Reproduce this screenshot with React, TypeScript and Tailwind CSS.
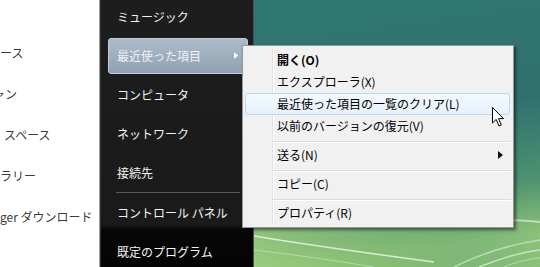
import React from 'react';

const leftItems = [
  { text: 'ース', cls: 'ml-0' },
  { text: 'ャン', cls: 'ml-[-7px]' },
  { text: 'スペース', cls: 'ml-[4px]' },
  { text: 'ラリー', cls: 'ml-0' },
  { text: 'ger ダウンロード', cls: 'ml-0' },
];

const darkItems = ['ミュージック', '最近使った項目', 'コンピュータ', 'ネットワーク', '接続先'];
const darkItems2 = ['コントロール パネル', '既定のプログラム'];

function MenuSep() {
  return (
    <div className="h-[7px] pt-[4px] pl-[27px]">
      <div className="h-px bg-[#dcdcdc]" />
      <div className="h-px bg-white" />
    </div>
  );
}

function MenuRow({ children, bold, active, arrow }: { children: React.ReactNode; bold?: boolean; active?: boolean; arrow?: boolean }) {
  return (
    <div
      className={
        active
          ? 'mr-[1px] flex h-[22px] items-center rounded-[3px] border border-[#b8d9f0] bg-[linear-gradient(#f4f9fe,#e6f1fb)] pl-[31px] text-[12px] text-black'
          : 'flex h-[22px] items-center pl-[32px] text-[12px] text-black'
      }
    >
      <span className={bold ? 'font-bold' : ''}>{children}</span>
      {arrow && (
        <svg className="ml-auto mr-[8px]" width="5" height="8" viewBox="0 0 5 8">
          <path d="M0 0 L5 4 L0 8 Z" fill="#111" />
        </svg>
      )}
    </div>
  );
}

export default function App() {
  return (
    <div className="relative flex h-[267px] w-[540px] overflow-hidden font-['Noto_Sans_CJK_JP','Noto_Sans',sans-serif]">
      {/* left program list */}
      <div className="w-[100px] shrink-0 overflow-hidden border-r border-[#9c9c9c] bg-white pt-[32px]">
        {leftItems.map((it) => (
          <div key={it.text} className="flex h-[41px] items-center whitespace-nowrap text-[12px] text-[#3a3a3a]">
            <span className={it.cls}>{it.text}</span>
          </div>
        ))}
      </div>

      {/* dark right column */}
      <div className="w-[154px] shrink-0 border-l border-[#303030] border-r border-r-[#505050] bg-[linear-gradient(#1d1d1d_0%,#1a1a1a_84%,#070707_86%,#040404_100%)] mt-0">
        <div className="mt-[-3px]">
          {darkItems.map((t) =>
            t === '最近使った項目' ? (
              <div key={t} className="flex h-[39px] items-center">
                <div className="ml-[7px] flex h-[36px] w-[140px] items-center rounded-[3px] border border-[#c3ced8] bg-[linear-gradient(#aebcc9,#8fa1b2)] pl-[8px] text-[12px] text-[#eef2f5]">
                  <span>{t}</span>
                  <svg className="ml-auto mr-[9px]" width="4" height="7" viewBox="0 0 4 7">
                    <path d="M0 0 L4 3.5 L0 7 Z" fill="#ffffff" />
                  </svg>
                </div>
              </div>
            ) : (
              <div key={t} className="flex h-[39px] items-center pl-[16px] text-[12px] text-[#f2f2f2]">
                {t}
              </div>
            )
          )}
          <div className="ml-[15px] mr-[13px] h-px bg-[#5a5a5a]" />
          {darkItems2.map((t) => (
            <div key={t} className="flex h-[39px] items-center pl-[16px] text-[12px] text-[#f2f2f2]">
              {t}
            </div>
          ))}
        </div>
      </div>

      {/* desktop */}
      <div className="relative flex-1">
        <svg className="absolute inset-0" width="286" height="267" viewBox="0 0 286 267">
          <defs>
            <linearGradient id="bg" x1="0" y1="0" x2="0.15" y2="1">
              <stop offset="0" stopColor="#2f7773" />
              <stop offset="0.5" stopColor="#30706f" />
              <stop offset="0.8" stopColor="#4e9271" />
              <stop offset="1" stopColor="#8cc277" />
            </linearGradient>
            <linearGradient id="bl" x1="0" y1="0" x2="1" y2="0">
              <stop offset="0" stopColor="#a6d27e" />
              <stop offset="0.6" stopColor="#72b070" stopOpacity="0.6" />
              <stop offset="1" stopColor="#3c8080" stopOpacity="0" />
            </linearGradient>
          </defs>
          <rect width="286" height="267" fill="url(#bg)" />
          <path d="M0 228 L286 228 L286 267 L0 267 Z" fill="url(#bl)" opacity="0.7" />
          <path d="M0 236 C60 246 120 254 180 262" stroke="#ffffff" strokeOpacity="0.7" strokeWidth="1.5" fill="none" />
          <path d="M0 250 C50 256 90 262 120 267" stroke="#ffffff" strokeOpacity="0.35" strokeWidth="1" fill="none" />
          <path d="M255 220 C265 220 275 221 286 222" stroke="#ffffff" strokeOpacity="0.5" strokeWidth="2" fill="none" />
          <path d="M200 267 C230 252 260 244 286 240" stroke="#ffffff" strokeOpacity="0.45" strokeWidth="1.5" fill="none" />
          <path d="M225 267 C250 257 268 252 286 250" stroke="#ffffff" strokeOpacity="0.55" strokeWidth="1.5" fill="none" />
          <path d="M250 267 C262 262 274 259 286 258" stroke="#ffffff" strokeOpacity="0.4" strokeWidth="1" fill="none" />
        </svg>
      </div>

      {/* context menu */}
      <div className="absolute left-[242px] top-[45px] w-[272px] border border-[#979797] bg-[#f1f1f2] px-[2px] pt-[3px] pb-[3px] shadow-[2px_2px_3px_rgba(0,0,0,0.5)]">
        <div className="absolute bottom-[2px] left-[29px] top-[2px] w-px bg-[#e2e2e2]" />
        <div className="absolute bottom-[2px] left-[30px] top-[2px] w-px bg-white" />
        <div className="relative">
          <MenuRow bold>開く(O)</MenuRow>
          <MenuRow>エクスプローラ(X)</MenuRow>
          <MenuRow active>最近使った項目の一覧のクリア(L)</MenuRow>
          <MenuRow>以前のバージョンの復元(V)</MenuRow>
          <MenuSep />
          <MenuRow arrow>送る(N)</MenuRow>
          <MenuSep />
          <MenuRow>コピー(C)</MenuRow>
          <MenuSep />
          <MenuRow>プロパティ(R)</MenuRow>
        </div>
      </div>

      {/* mouse pointer */}
      <svg className="absolute left-[492px] top-[107px]" width="13" height="21" viewBox="0 0 13 21">
        <path d="M0.5 0.5 L0.5 16 L4.2 12.4 L7 19 L9.3 18 L6.6 11.6 L11.5 11.6 Z" fill="#ffffff" stroke="#000000" strokeWidth="1" strokeLinejoin="round" />
      </svg>
    </div>
  );
}
